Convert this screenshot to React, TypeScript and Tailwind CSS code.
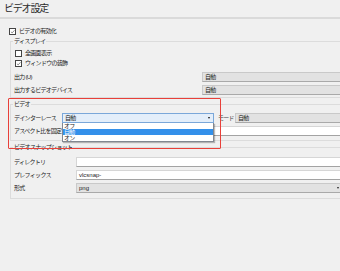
import React from 'react';

const FONT = "font-['Liberation_Sans','Noto_Sans_CJK_JP',sans-serif]";

function Check({ checked }: { checked?: boolean }) {
  return (
    <span className="relative h-[7px] w-[7px] shrink-0 border-[0.8px] border-[#444] bg-white">
      {checked && (
        <svg viewBox="0 0 7 7" className="absolute left-0 top-0 h-[5.4px] w-[5.4px]">
          <path d="M1.2 3.6 L2.8 5.1 L5.9 1.6" fill="none" stroke="#333" strokeWidth="0.7" />
        </svg>
      )}
    </span>
  );
}

function Combo({ text, className = '', arrow }: { text: string; className?: string; arrow?: boolean }) {
  return (
    <div
      className={`relative flex h-[10px] items-center border border-[#c9c9c9] border-b-[#a9a9a9] bg-[#e2e2e2] pl-[2px] ${className}`}
    >
      {text}
      {arrow && (
        <span className="absolute right-[4px] top-[3.5px] h-0 w-0 border-x-[1.5px] border-t-[2px] border-x-transparent border-t-[#222]" />
      )}
    </div>
  );
}

function Input({ text = '', className = '' }: { text?: string; className?: string }) {
  return (
    <div className={`flex h-[10px] items-center border border-[#d6d6d6] border-b-[#a3a3a3] bg-white pl-[2px] ${className}`}>
      {text}
    </div>
  );
}

export default function App() {
  return (
    <div className={`relative h-[271px] w-[340px] overflow-hidden bg-[#f0f0f0] text-[6px] leading-[8px] tracking-[-0.7px] text-[#1c1c1c] ${FONT}`}>
      {/* header */}
      <div className="h-[17px] pl-[4px] text-[10px] leading-[17px] tracking-[-1.2px] text-[#2b2b2b]">ビデオ設定</div>
      <div className="h-[2px] bg-[#dadada]" />

      <div className="mt-[7px] flex h-[10px] items-center gap-[3px] pl-[9px]">
        <Check checked />
        ビデオの有効化
      </div>

      {/* Display */}
      <fieldset className="ml-[10px] mt-[1px] w-[340px] border border-[#dcdcdc] pb-[1px]">
        <legend className="ml-[2px] px-[1px] leading-[8px]">ディスプレイ</legend>
        <div className="mt-[3px] flex h-[10px] items-center gap-[3px] pl-[4px]">
          <Check />
          全画面表示
        </div>
        <div className="flex h-[10px] items-center gap-[3px] pl-[4px]">
          <Check checked />
          ウィンドウの装飾
        </div>
        <div className="mt-[2px] flex h-[13px] items-center">
          <span className="w-[191px] pl-[3px]">出力 (U)</span>
          <Combo text="自動" className="flex-1" />
        </div>
        <div className="flex h-[13px] items-center">
          <span className="w-[191px] pl-[3px]">出力するビデオデバイス</span>
          <Combo text="自動" className="flex-1" />
        </div>
      </fieldset>

      {/* Video */}
      <fieldset className="ml-[10px] mt-[2px] w-[340px] border border-[#dcdcdc] pb-[3px]">
        <legend className="ml-[2px] px-[1px] leading-[8px]">ビデオ</legend>
        <div className="mt-[3px] flex h-[13px] items-center">
          <span className="w-[51px] shrink-0 whitespace-nowrap pl-[3px]">デインターレース</span>
          <div className="relative w-[152px] shrink-0">
            <div className="relative flex h-[10px] items-center border border-[#7aa7d9] bg-[#e3eefa] pl-[2px]">
              自動
              <span className="absolute right-[3px] top-[3.5px] h-0 w-0 border-x-[1.5px] border-t-[2px] border-x-transparent border-t-[#111]" />
            </div>
            <div className="absolute left-0 top-full z-10 w-full border border-[#828790] border-t-0 bg-white shadow-[1px_1px_1px_rgba(0,0,0,0.25)]">
              <div className="h-[6px] pl-[1px] leading-[6px]">オフ</div>
              <div className="h-[6px] bg-[#3390ea] pl-[1px] leading-[6px] text-white">自動</div>
              <div className="h-[6px] pl-[1px] leading-[6px]">オン</div>
            </div>
          </div>
          <span className="w-[21px] shrink-0 whitespace-nowrap pl-[4px] text-[#444]">モード</span>
          <Combo text="自動" className="flex-1" />
        </div>
        <div className="flex h-[13px] items-center">
          <span className="w-[51px] shrink-0 whitespace-nowrap pl-[3px]">アスペクト比を固定</span>
          <Input className="flex-1" />
        </div>
      </fieldset>

      {/* Snapshots */}
      <fieldset className="ml-[10px] mt-[2px] w-[340px] border border-[#dcdcdc] pb-[3.5px]">
        <legend className="ml-[2px] px-[1px] leading-[8px]">ビデオスナップショット</legend>
        <div className="mt-[4px] flex h-[13px] items-center">
          <span className="w-[65px] shrink-0 pl-[3px]">ディレクトリ</span>
          <Input className="flex-1" />
        </div>
        <div className="flex h-[13px] items-center">
          <span className="w-[65px] shrink-0 pl-[3px]">プレフィックス</span>
          <Input text="vlcsnap-" className="flex-1 tracking-normal" />
        </div>
        <div className="flex h-[13px] items-center">
          <span className="w-[65px] shrink-0 pl-[3px]">形式</span>
          <Combo text="png" arrow className="w-[268px] tracking-normal" />
        </div>
      </fieldset>

      {/* annotation */}
      <div className="pointer-events-none absolute left-[8px] top-[98px] h-[51px] w-[213px] rounded-[1px] border-[1.5px] border-[#e8403a]" />
    </div>
  );
}
